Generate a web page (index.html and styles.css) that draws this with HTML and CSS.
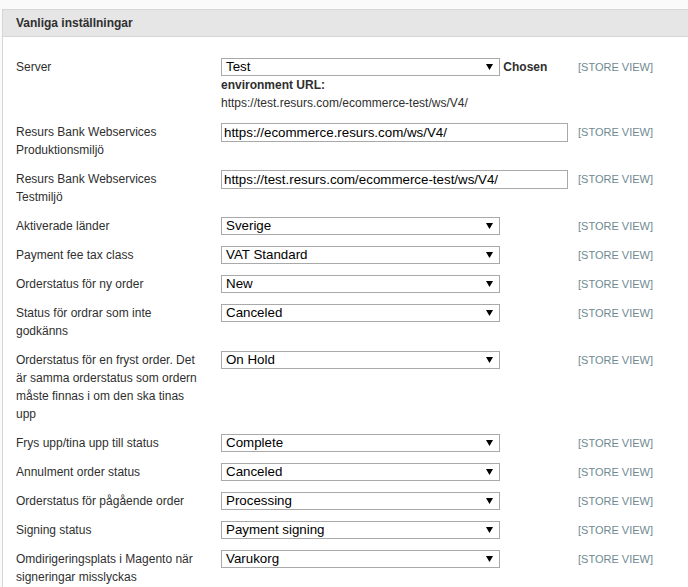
FILE: index.html
```html
<!DOCTYPE html>
<html lang="sv">
<head>
<meta charset="utf-8">
<title>Vanliga inställningar</title>
<link rel="stylesheet" href="styles.css">
</head>
<body>
<div class="section">
  <div class="section-head">Vanliga inställningar</div>
  <div class="section-body">
    <div class="row">
      <div class="label">Server</div>
      <div class="value">
        <div class="server-line"><span class="select"><span class="opt">Test</span><svg class="arrow" width="7" height="6" viewBox="0 0 7 6"><polygon points="0,0 7,0 3.5,6" fill="#000"/></svg></span> <b class="note">Chosen</b></div>
        <div class="note">environment URL:</div>
        <div class="url">https://test.resurs.com/ecommerce-test/ws/V4/</div>
      </div>
      <div class="scope">[STORE VIEW]</div>
    </div>
    <div class="row">
      <div class="label">Resurs Bank Webservices Produktionsmiljö</div>
      <div class="value"><span class="input">https://ecommerce.resurs.com/ws/V4/</span></div>
      <div class="scope">[STORE VIEW]</div>
    </div>
    <div class="row">
      <div class="label">Resurs Bank Webservices Testmiljö</div>
      <div class="value"><span class="input">https://test.resurs.com/ecommerce-test/ws/V4/</span></div>
      <div class="scope">[STORE VIEW]</div>
    </div>
    <div class="row">
      <div class="label">Aktiverade länder</div>
      <div class="value"><span class="select"><span class="opt">Sverige</span><svg class="arrow" width="7" height="6" viewBox="0 0 7 6"><polygon points="0,0 7,0 3.5,6" fill="#000"/></svg></span></div>
      <div class="scope">[STORE VIEW]</div>
    </div>
    <div class="row">
      <div class="label">Payment fee tax class</div>
      <div class="value"><span class="select"><span class="opt">VAT Standard</span><svg class="arrow" width="7" height="6" viewBox="0 0 7 6"><polygon points="0,0 7,0 3.5,6" fill="#000"/></svg></span></div>
      <div class="scope">[STORE VIEW]</div>
    </div>
    <div class="row">
      <div class="label">Orderstatus för ny order</div>
      <div class="value"><span class="select"><span class="opt">New</span><svg class="arrow" width="7" height="6" viewBox="0 0 7 6"><polygon points="0,0 7,0 3.5,6" fill="#000"/></svg></span></div>
      <div class="scope">[STORE VIEW]</div>
    </div>
    <div class="row">
      <div class="label">Status för ordrar som inte godkänns</div>
      <div class="value"><span class="select"><span class="opt">Canceled</span><svg class="arrow" width="7" height="6" viewBox="0 0 7 6"><polygon points="0,0 7,0 3.5,6" fill="#000"/></svg></span></div>
      <div class="scope">[STORE VIEW]</div>
    </div>
    <div class="row">
      <div class="label">Orderstatus för en fryst order. Det är samma orderstatus som ordern måste finnas i om den ska tinas upp</div>
      <div class="value"><span class="select"><span class="opt">On Hold</span><svg class="arrow" width="7" height="6" viewBox="0 0 7 6"><polygon points="0,0 7,0 3.5,6" fill="#000"/></svg></span></div>
      <div class="scope">[STORE VIEW]</div>
    </div>
    <div class="row">
      <div class="label">Frys upp/tina upp till status</div>
      <div class="value"><span class="select"><span class="opt">Complete</span><svg class="arrow" width="7" height="6" viewBox="0 0 7 6"><polygon points="0,0 7,0 3.5,6" fill="#000"/></svg></span></div>
      <div class="scope">[STORE VIEW]</div>
    </div>
    <div class="row">
      <div class="label">Annulment order status</div>
      <div class="value"><span class="select"><span class="opt">Canceled</span><svg class="arrow" width="7" height="6" viewBox="0 0 7 6"><polygon points="0,0 7,0 3.5,6" fill="#000"/></svg></span></div>
      <div class="scope">[STORE VIEW]</div>
    </div>
    <div class="row">
      <div class="label">Orderstatus för pågående order</div>
      <div class="value"><span class="select"><span class="opt">Processing</span><svg class="arrow" width="7" height="6" viewBox="0 0 7 6"><polygon points="0,0 7,0 3.5,6" fill="#000"/></svg></span></div>
      <div class="scope">[STORE VIEW]</div>
    </div>
    <div class="row">
      <div class="label">Signing status</div>
      <div class="value"><span class="select"><span class="opt">Payment signing</span><svg class="arrow" width="7" height="6" viewBox="0 0 7 6"><polygon points="0,0 7,0 3.5,6" fill="#000"/></svg></span></div>
      <div class="scope">[STORE VIEW]</div>
    </div>
    <div class="row">
      <div class="label">Omdirigeringsplats i Magento när signeringar misslyckas</div>
      <div class="value"><span class="select"><span class="opt">Varukorg</span><svg class="arrow" width="7" height="6" viewBox="0 0 7 6"><polygon points="0,0 7,0 3.5,6" fill="#000"/></svg></span></div>
      <div class="scope">[STORE VIEW]</div>
    </div>
  </div>
</div>
</body>
</html>
```
FILE: styles.css
```css
html, body {
  margin: 0;
  padding: 0;
  background: #fafafa;
  font-family: "Liberation Sans", Arial, sans-serif;
  font-size: 12px;
  color: #2f2f2f;
}
.section {
  margin: 9px 0 0 2px;
}
.section-head {
  background: #e6e6e6;
  border: 1px solid #d6d6d6;
  border-right: 0;
  height: 26px;
  line-height: 26px;
  padding-left: 13px;
  font-weight: bold;
  color: #2f2f2f;
}
.section-body {
  background: #fff;
  border-left: 1px solid #d6d6d6;
  padding: 16px 0 20px 13px;
}
.row {
  display: grid;
  grid-template-columns: 205px 357px auto;
  padding: 5px 0 6px;
  line-height: 18px;
}
.label {
  padding-right: 18px;
}
.value {
  line-height: 18px;
}
.select, .input {
  display: inline-flex;
  align-items: center;
  box-sizing: border-box;
  height: 18px;
  line-height: 16px;
  border: 1px solid #a9a9a9;
  background: #fff;
  color: #000;
  font-size: 13.33px;
  vertical-align: top;
  padding-left: 4px;
  overflow: hidden;
}
.opt {
  margin-top: -1px;
}
.select {
  width: 279px;
  justify-content: space-between;
  padding-right: 6px;
}
.input {
  width: 347px;
  height: 19px;
  padding-left: 2px;
}
.arrow {
  display: block;
}
.note {
  font-weight: bold;
}
.scope {
  font-size: 11px;
  color: #6f8992;
}
```
